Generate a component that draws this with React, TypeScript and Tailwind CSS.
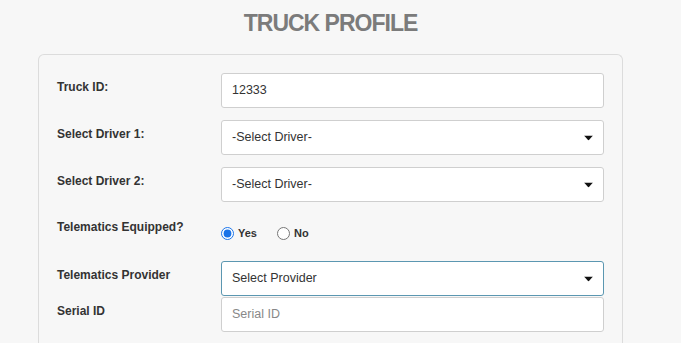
import { useState } from "react";

const font = { fontFamily: '"Liberation Sans", Arial, sans-serif' };

function Caret() {
  return (
    <svg width="9" height="5" viewBox="0 0 9 5" className="absolute right-[10px] top-1/2 -translate-y-1/2">
      <path d="M0 0h9L4.5 5z" fill="#111" />
    </svg>
  );
}

function Field({ value, placeholder, select, focused }: { value?: string; placeholder?: string; select?: boolean; focused?: boolean }) {
  return (
    <div
      className={`relative flex h-[35px] flex-1 items-center rounded-[3px] border bg-white pl-[10px] text-[12.5px] ${
        focused ? "border-[#5b97b1]" : "border-[#cfcfcf]"
      }`}
    >
      {value ? <span className="text-[#333]">{value}</span> : <span className="text-[#888]">{placeholder}</span>}
      {select && <Caret />}
    </div>
  );
}

function Row({ label, children, className = "" }: { label: string; children: React.ReactNode; className?: string }) {
  return (
    <div className={`flex ${className}`}>
      <label className="w-[164px] shrink-0 pt-[7px] text-[12px] leading-[14px] font-bold text-[#333]">{label}</label>
      {children}
    </div>
  );
}

export default function App() {
  const [equipped, setEquipped] = useState("yes");

  return (
    <div className="min-h-[343px] bg-[#f7f7f7]" style={font}>
      <div className="ml-[38px] w-[585px]">
        <h1 className="pt-[9px] pb-[17px] text-center text-[23px] leading-[28px] font-bold tracking-[-1px] text-[#7b7b7b]">
          TRUCK PROFILE
        </h1>
        <div className="h-[300px] rounded-t-[6px] border border-b-0 border-[#dcdcdc] px-[18px] pt-[18px]">
          <Row label="Truck ID:" className="mb-[12px]">
            <Field value="12333" />
          </Row>
          <Row label="Select Driver 1:" className="mb-[12px]">
            <Field value="-Select Driver-" select />
          </Row>
          <Row label="Select Driver 2:">
            <Field value="-Select Driver-" select />
          </Row>
          <div className="flex h-[59px]">
            <label className="w-[164px] shrink-0 pt-[18px] text-[12px] leading-[14px] font-bold text-[#333]">
              Telematics Equipped?
            </label>
            <div className="mt-[24px] flex h-[14px] items-center text-[11px] font-bold text-[#333]">
              <label className="flex items-center gap-[4px]">
                <input
                  type="radio"
                  name="eq"
                  className="m-0 h-[13px] w-[13px] accent-[#1a73e8]"
                  checked={equipped === "yes"}
                  onChange={() => setEquipped("yes")}
                />
                Yes
              </label>
              <label className="ml-[20px] flex items-center gap-[4px]">
                <input
                  type="radio"
                  name="eq"
                  className="m-0 h-[13px] w-[13px] accent-[#1a73e8]"
                  checked={equipped === "no"}
                  onChange={() => setEquipped("no")}
                />
                No
              </label>
            </div>
          </div>
          <Row label="Telematics Provider">
            <Field value="Select Provider" select focused />
          </Row>
          <Row label="Serial ID" className="mt-[1px]">
            <Field placeholder="Serial ID" />
          </Row>
        </div>
      </div>
    </div>
  );
}
